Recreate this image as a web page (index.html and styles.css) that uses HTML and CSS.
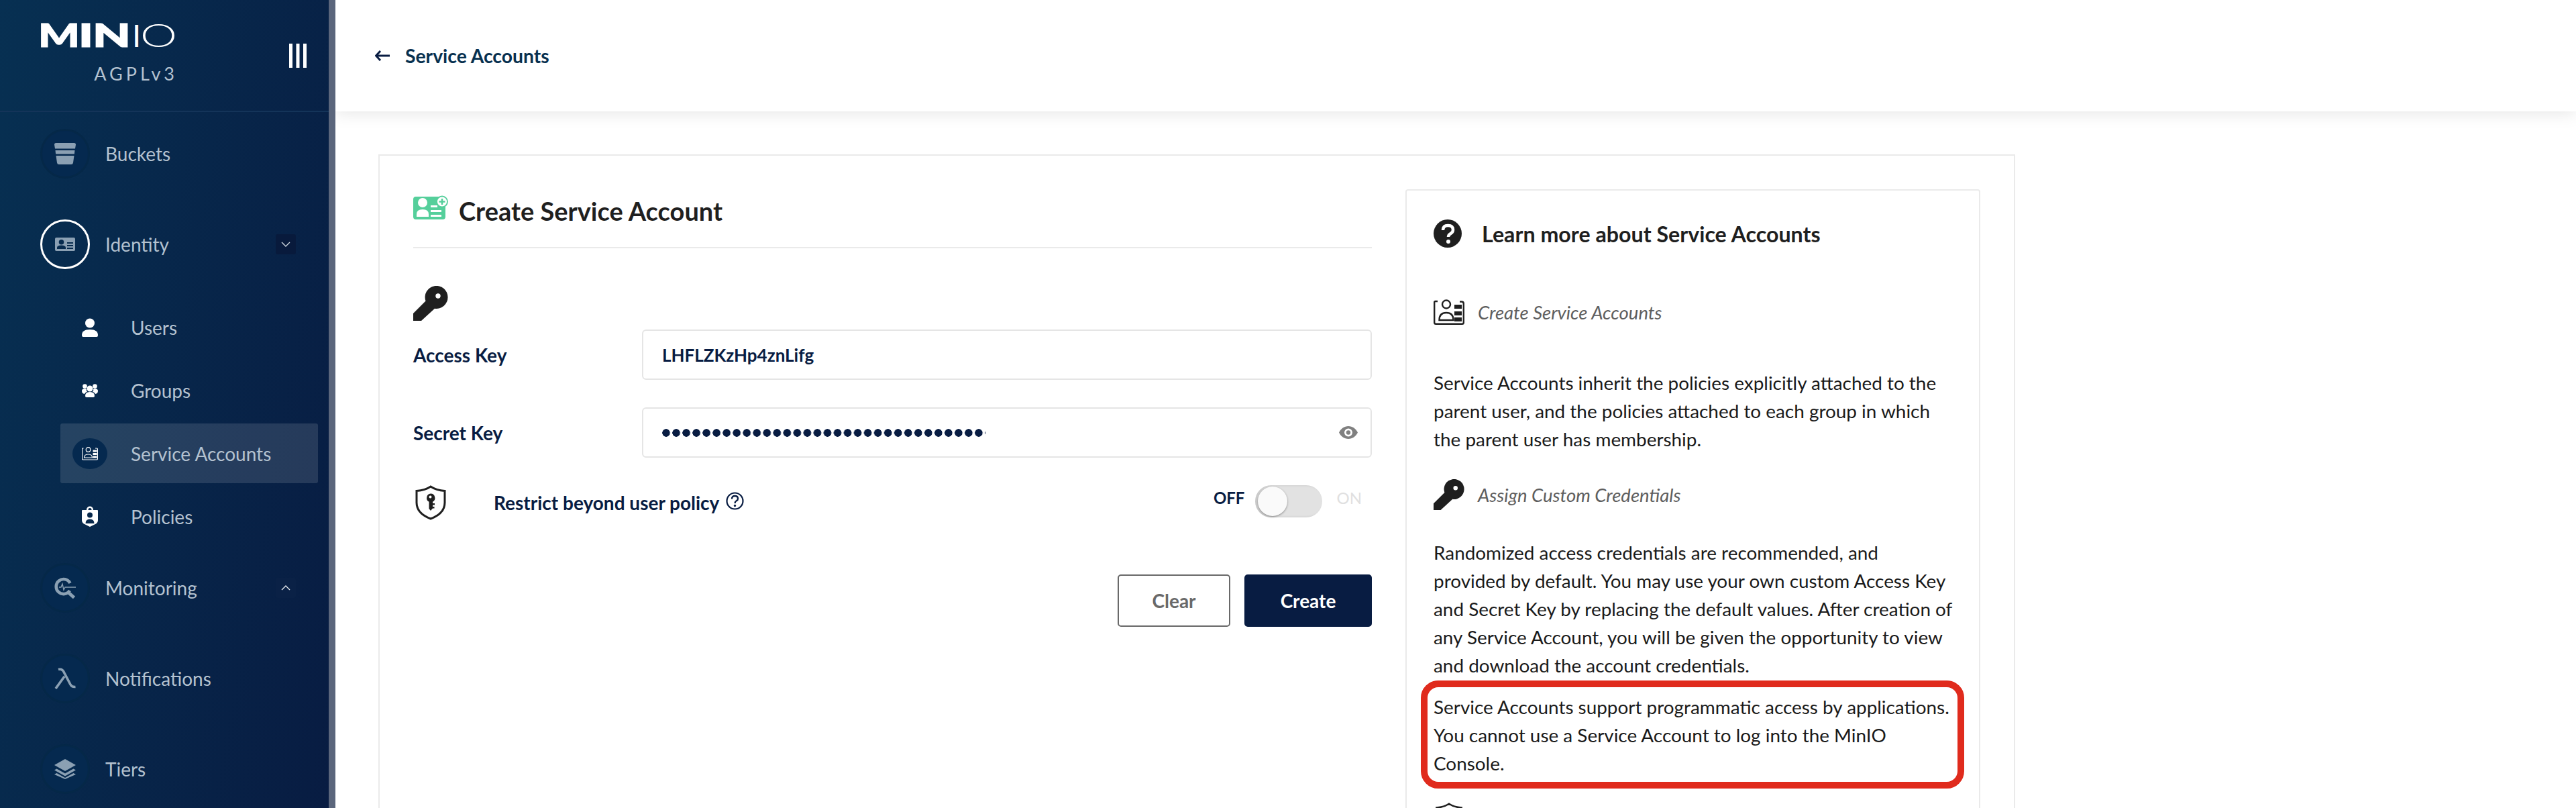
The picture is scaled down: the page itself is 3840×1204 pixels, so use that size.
FILE: index.html
```html
<!DOCTYPE html>
<html lang="en">
<head>
  <meta charset="UTF-8">
  <title>Create Service Account</title>
  <link rel="stylesheet" href="styles.css">
</head>
<body>

  <aside class="sidebar">
    <div class="brand">
      <div class="brand-text">
        <svg class="logo" viewBox="-6 -14 206 62" width="206" height="62">
          <text class="logo-bold" x="-3" y="33" textLength="62" lengthAdjust="spacingAndGlyphs">M</text>
          <text class="logo-bold" x="57" y="33" textLength="22" lengthAdjust="spacingAndGlyphs">I</text>
          <text class="logo-bold" x="78" y="33" textLength="57" lengthAdjust="spacingAndGlyphs">N</text>
          <text class="logo-reg" x="137" y="33">I</text>
          <text class="logo-thin" x="149" y="33" textLength="55" lengthAdjust="spacingAndGlyphs">O</text>
        </svg>
        <div class="license">AGPLv3</div>
      </div>
      <svg class="collapse" viewBox="0 0 26 36" width="26" height="36"><path d="M0 0h5v36H0zM10.500 0h5v36h-5zM21 0h5v36h-5z" fill="#fff"/></svg>
    </div>

    <nav class="nav">
      <a class="nav-item">
        <span class="nav-icon">
          <svg viewBox="0 0 32 32" width="32" height="32"><path d="M0 2.500Q0 0 2.500 0h27Q32 0 32 2.500L31 8.500H1zM1.500 11h29l-.6 5.500H2.100zM2.500 19h27l-1.500 10.500Q27.700 32 25 32H7q-2.700 0-3-2.500z" fill="#8ba0b3"/></svg>
        </span>
        <span class="nav-label">Buckets</span>
      </a>

      <a class="nav-item open">
        <span class="nav-icon active">
          <svg viewBox="0 0 30 20" width="30" height="20"><path fill-rule="evenodd" d="M2 0h26q2 0 2 2v16q0 2-2 2H2q-2 0-2-2V2q0-2 2-2zm7.500 3a3.800 3.800 0 1 0 0 7.600 3.800 3.800 0 0 0 0-7.600zM3 17h13v-2q0-3.500-6.500-3.500T3 15zM18 7v2h9V7zm0 4v2h9v-2zm0 4v2h9v-2z" fill="#8ba0b3"/></svg>
        </span>
        <span class="nav-label">Identity</span>
        <span class="caret dark">
          <svg viewBox="0 0 14 8" width="14" height="8"><path d="M1 1l6 6 6-6" fill="none" stroke="#cfd8e0" stroke-width="1.400"/></svg>
        </span>
      </a>

      <div class="sub-list">
        <a class="sub-item">
          <span class="sub-icon">
            <svg viewBox="0 0 24 28" width="24" height="28"><circle cx="12" cy="7.500" r="7" fill="#fff"/><path d="M0 25.500Q0 17 12 17t12 8.500q0 2.500-2 2.500H2q-2 0-2-2.500z" fill="#fff"/></svg>
          </span>
          <span class="sub-label">Users</span>
        </a>
        <a class="sub-item">
          <span class="sub-icon">
            <svg viewBox="0 0 24 20" width="24" height="20"><g fill="#fff"><circle cx="12" cy="7" r="4.500"/><path d="M5 18q0-6 7-6t7 6q0 2-2 2H7q-2 0-2-2z"/><circle cx="4.500" cy="3.500" r="3.300"/><circle cx="19.500" cy="3.500" r="3.300"/><path d="M0 10.500Q0 7 4.500 7q2 0 2.500.8-1 2.500 1 3.700-3 1-4 3.500Q0 14.500 0 10.500zM24 10.500Q24 7 19.500 7q-2 0-2.500.8 1 2.500-1 3.700 3 1 4 3.500 4-.5 4-4.500z"/></g></svg>
          </span>
          <span class="sub-label">Groups</span>
        </a>
        <a class="sub-item selected">
          <span class="sub-icon dark-disc">
            <svg viewBox="0 0 24 20" width="24" height="20"><g fill="none" stroke="#fff" stroke-width="1.200"><path d="M2.500 2H1q-.5 0-.5.500v15q0 1.500 1.500 1.500h20q1.500 0 1.500-1.500v-14q0-1.500-1.500-1.500h-2"/><circle cx="9.500" cy="4" r="3.300"/><path d="M3.500 16q0-5 6-5t6 5z"/></g><path d="M16.500 4.500h6v3h-6zM16.500 9h6v3h-6zM16.500 13.500h6v3h-6z" fill="#fff"/></svg>
          </span>
          <span class="sub-label">Service Accounts</span>
        </a>
        <a class="sub-item">
          <span class="sub-icon">
            <svg viewBox="0 0 24 31" width="24" height="31"><path fill-rule="evenodd" d="M7 6V5.500a5 5 0 0 1 10 0V6h6q1 0 1 1v14q0 4-4 6l-8 4-8-4q-4-2-4-6V7q0-1 1-1zm2.500 0h5v-.5a2.500 2.500 0 0 0-5 0zM12 9.500a4 4 0 1 0 0 8 4 4 0 0 0 0-8zM5.500 26h13q0-6.500-6.500-6.500T5.500 26z" fill="#fff"/></svg>
          </span>
          <span class="sub-label">Policies</span>
        </a>
      </div>

      <a class="nav-item">
        <span class="nav-icon">
          <svg viewBox="0 0 32 32" width="32" height="32"><g fill="none" stroke="#8ba0b3"><path d="M23.500 9A11 11 0 1 0 23 20" stroke-width="4.600"/><path d="M20.500 22.500l9 8" stroke-width="5"/><path d="M7 15h3l2-5 2 9 2-4h16" stroke-width="1.400"/></g></svg>
        </span>
        <span class="nav-label">Monitoring</span>
        <span class="caret">
          <svg viewBox="0 0 14 8" width="14" height="8"><path d="M1 7l6-6 6 6" fill="none" stroke="#e6ebef" stroke-width="1.400"/></svg>
        </span>
      </a>

      <a class="nav-item">
        <span class="nav-icon">
          <svg viewBox="0 0 32 32" width="32" height="32"><path d="M6 2.500Q12 1 14.500 7L24 25q2 4 7.500 3.500M15 13L2 31" fill="none" stroke="#8ba0b3" stroke-width="3.600"/></svg>
        </span>
        <span class="nav-label">Notifications</span>
      </a>

      <a class="nav-item">
        <span class="nav-icon">
          <svg viewBox="0 0 32 30" width="32" height="30"><path d="M16 0l16 9-16 9L0 9z" fill="#8ba0b3"/><path d="M3.500 14.500L16 21.500l12.500-7L32 16.500 16 25.500 0 16.500zM3.500 21L16 28l12.500-7L32 23 16 30 0 23z" fill="#8ba0b3"/></svg>
        </span>
        <span class="nav-label">Tiers</span>
      </a>
    </nav>
  </aside>

  <main class="main">
    <header class="topbar">
      <svg class="back-arrow" viewBox="0 0 22 16" width="22" height="16"><path d="M8 1L1.500 8 8 15M2 8h20" fill="none" stroke="#081c42" stroke-width="3"/></svg>
      <span class="back-text">Service Accounts</span>
    </header>

    <section class="card">
      <div class="form-col">
        <div class="form-title">
          <svg viewBox="0 0 52 36" width="52" height="36"><path fill-rule="evenodd" d="M4 2h35a11 11 0 0 0 9 12v18q0 4-4 4H4q-4 0-4-4V6q0-4 4-4zm10 2a7 7 0 1 0 0 14 7 7 0 0 0 0-14zM5 32h18v-4q0-7-9-7t-9 7zm21-17v3h10v-3zm0 7v3h16v-3zm0 7v3h16v-3z" fill="#55cf9b"/><circle cx="43" cy="9.500" r="8" fill="#fff" stroke="#55cf9b" stroke-width="1.800"/><path d="M43 5v9M38.500 9.500h9" stroke="#55cf9b" stroke-width="2.600"/></svg>
          <h1>Create Service Account</h1>
        </div>

        <svg class="key-big" viewBox="0 0 52 52" width="52" height="52"><path fill-rule="evenodd" d="M0 41L18.500 22.500A17 17 0 1 1 32 33.700L12 52H0zM37 11.300a3.700 3.700 0 1 0 0 7.400 3.700 3.700 0 0 0 0-7.400z" fill="#1f1f1f"/></svg>

        <div class="field">
          <label class="field-label">Access Key</label>
          <div class="field-input">LHFLZKzHp4znLifg</div>
        </div>

        <div class="field">
          <label class="field-label">Secret Key</label>
          <div class="field-input">
            <span class="dots"></span>
            <svg class="eye" viewBox="0 0 28 19" width="28" height="19"><path fill-rule="evenodd" d="M14 0C8 0 2.800 3.800 0 9.500 2.800 15.200 8 19 14 19s11.200-3.800 14-9.500C25.200 3.800 20 0 14 0zm0 3.500a6 6 0 1 1 0 12 6 6 0 0 1 0-12zm0 2.800a3.200 3.200 0 1 0 0 6.400 3.200 3.200 0 0 0 0-6.400z" fill="#808080"/></svg>
          </div>
        </div>

        <div class="restrict">
          <svg class="shield" viewBox="0 0 52 52" width="52" height="52"><path d="M26 2q8 5.500 21 6.500V26Q47 42 26 50 5 42 5 26V8.500Q18 7.500 26 2z" fill="none" stroke="#1f1f1f" stroke-width="3"/><path fill-rule="evenodd" d="M26 12.500a6.500 6.500 0 0 1 3 12.200V27h3v2.500h-3V32h2.500v2.500H29L26 38l-2.500-3V24.700a6.500 6.500 0 0 1 2.500-12.200zm-.5 3a2 2 0 1 0 0 4 2 2 0 0 0 0-4z" fill="#1f1f1f"/></svg>
          <span class="restrict-label">Restrict beyond user policy</span>
          <svg class="help-dot" viewBox="0 0 27 27" width="27" height="27"><circle cx="13.500" cy="13.500" r="12" fill="none" stroke="#081c42" stroke-width="2.200"/><path d="M9 10.500q0-4.500 4.500-4.500t4.500 4q0 2.200-2.200 3.300t-2.300 3.700" fill="none" stroke="#081c42" stroke-width="2.400"/><circle cx="13.500" cy="20.500" r="1.700" fill="#081c42"/></svg>
          <span class="switch-state on">OFF</span>
          <span class="switch"><span class="switch-knob"></span></span>
          <span class="switch-state">ON</span>
        </div>

        <div class="actions">
          <button class="btn btn-clear">Clear</button>
          <button class="btn btn-create">Create</button>
        </div>
      </div>

      <div class="help-box">
        <div class="help-title">
          <svg viewBox="0 0 42 42" width="42" height="42"><circle cx="21" cy="21" r="21" fill="#1f1f1f"/><path d="M14 16q0-7 7.500-7t7.500 6.500q0 3.500-3.500 5.500t-3.500 5" fill="none" stroke="#fff" stroke-width="4.500"/><circle cx="22" cy="33" r="3" fill="#fff"/></svg>
          <h2>Learn more about Service Accounts</h2>
        </div>

        <div class="help-head first">
          <svg viewBox="0 0 46 38" width="46" height="38"><g fill="none" stroke="#1f1f1f" stroke-width="2.400"><path d="M6 3H2.500Q1.200 3 1.200 4.500v30q0 2.300 2.300 2.300h39q2.300 0 2.300-2.300v-28q0-3-3-3H39"/><circle cx="19" cy="7.500" r="6"/><path d="M8.500 31q0-11 10.500-11t10.500 11z"/></g><path d="M31 8h11v6H31zM31 18h11v6H31zM31 27h11v6H31z" fill="#1f1f1f"/></svg>
          <span>Create Service Accounts</span>
        </div>
        <p class="after-first">Service Accounts inherit the policies explicitly attached to the parent user, and the policies attached to each group in which the parent user has membership.</p>

        <div class="help-head second">
          <svg viewBox="0 0 52 52" width="46" height="46"><path fill-rule="evenodd" d="M0 41L18.500 22.500A17 17 0 1 1 32 33.700L12 52H0zM37 11.300a3.700 3.700 0 1 0 0 7.400 3.700 3.700 0 0 0 0-7.400z" fill="#1f1f1f"/></svg>
          <span>Assign Custom Credentials</span>
        </div>
        <p class="after-second">Randomized access credentials are recommended, and provided by default. You may use your own custom Access Key and Secret Key by replacing the default values. After creation of any Service Account, you will be given the opportunity to view and download the account credentials.</p>
        <p class="note">Service Accounts support programmatic access by applications. You cannot use a Service Account to log into the MinIO Console.</p>

        <div class="help-head third">
          <svg viewBox="0 0 52 52" width="46" height="46"><path d="M26 2q8 5.500 21 6.500V26Q47 42 26 50 5 42 5 26V8.500Q18 7.500 26 2z" fill="none" stroke="#1f1f1f" stroke-width="3"/></svg>
        </div>
        <div class="callout"></div>
      </div>
    </section>
  </main>

</body>
</html>
```

FILE: styles.css
```css
* {
  box-sizing: border-box;
}

html, body {
  margin: 0;
  height: 1204px;
  overflow: hidden;
}

body {
  display: flex;
  font-family: "Lato", sans-serif;
  background-color: #fff;
  color: #081c42;
}

/* sidebar */
.sidebar {
  width: 500px;
  height: 1204px;
  flex-shrink: 0;
  background: linear-gradient(100deg, #073052 0%, #081c42 100%);
  border-right: 10px solid #5b667c;
  overflow: hidden;
}

.brand {
  height: 167px;
  padding: 23px 33px 0 54px;
  display: flex;
  justify-content: space-between;
  align-items: flex-start;
  border-bottom: 2px solid #143459;
}

.logo {
  display: block;
}

.logo-bold,
.logo-reg,
.logo-thin {
  font-size: 47px;
  fill: #fff;
}

.logo-bold {
  font-weight: 900;
  stroke: #fff;
  stroke-width: 1.200px;
}

.logo-reg {
  font-weight: 400;
}

.logo-thin {
  font-weight: 300;
}

.license {
  margin: 10px -5px 0 0;
  text-align: right;
  font-size: 27px;
  line-height: 30px;
  letter-spacing: 5px;
  color: #b4c2d0;
}

.collapse {
  margin-top: 42px;
}

.nav {
  padding: 25px 0 0 60px;
}

.nav-item {
  display: flex;
  align-items: center;
  height: 74px;
  margin-bottom: 61px;
  padding-right: 49px;
}

.nav-item.open {
  margin-bottom: 42px;
}

.nav-icon {
  width: 74px;
  height: 74px;
  border-radius: 50%;
  flex-shrink: 0;
  display: flex;
  align-items: center;
  justify-content: center;
  background-color: #05294f;
  border: 3px solid #052848;
}

.nav-icon.active {
  background-color: transparent;
  border-color: #fff;
}

.nav-label {
  margin-left: 23px;
  font-size: 28px;
  color: #b4c2d0;
  flex-grow: 1;
}

.caret {
  width: 30px;
  height: 30px;
  border-radius: 3px;
  display: flex;
  align-items: center;
  justify-content: center;
  background-color: #0a2146;
}

.caret.dark {
  background-color: #081a3c;
}

.sub-list {
  margin: 0 16px 25px 30px;
  display: flex;
  flex-direction: column;
  gap: 5px;
}

.sub-item {
  display: flex;
  align-items: center;
  height: 89px;
  padding-left: 18px;
  border-radius: 3px;
}

.sub-item.selected {
  background-color: rgba(255, 255, 255, 0.12);
}

.sub-icon {
  width: 52px;
  height: 46px;
  flex-shrink: 0;
  border-radius: 50%;
  display: flex;
  align-items: center;
  justify-content: center;
}

.sub-icon.dark-disc {
  background-color: #05294f;
}

.sub-label {
  margin-left: 35px;
  font-size: 28px;
  color: #b4c2d0;
}

/* main area */
.main {
  flex-grow: 1;
  min-width: 0;
  height: 1204px;
  overflow: hidden;
}

.topbar {
  height: 166px;
  padding-left: 59px;
  display: flex;
  align-items: center;
  background-color: #fff;
  box-shadow: 0 3px 24px rgba(0, 0, 0, 0.1);
}

.back-text {
  margin-left: 23px;
  font-size: 28.300px;
  font-weight: 700;
  color: #07304f;
}

.card {
  width: 2440px;
  height: 1100px;
  margin: 64px 0 0 64px;
  padding: 59px 50px 0;
  display: flex;
  gap: 50px;
  align-items: flex-start;
  border: 2px solid #eaeaea;
}

.form-col {
  width: 1429px;
  flex-shrink: 0;
}

.form-title {
  display: flex;
  align-items: flex-start;
  gap: 16px;
  height: 79px;
  border-bottom: 2px solid #eaeaea;
}

.form-title h1 {
  margin: 0;
  font-size: 38px;
  line-height: 47px;
  font-weight: 700;
  color: #1f1f1f;
}

.key-big {
  display: block;
  margin-top: 56px;
}

.field {
  display: flex;
  align-items: center;
  margin-bottom: 41px;
}

.key-big + .field {
  margin-top: 13px;
}

.field-label {
  width: 341px;
  flex-shrink: 0;
  font-size: 28px;
  font-weight: 700;
}

.field-input {
  flex-grow: 1;
  height: 75px;
  padding: 0 28px;
  display: flex;
  align-items: center;
  justify-content: space-between;
  border: 2px solid #e5e5e5;
  border-radius: 6px;
  font-size: 26px;
  font-weight: 700;
}

.dots {
  display: block;
  width: 482px;
  height: 12px;
  background-image: radial-gradient(circle at 6px 6px, #081c42 5.500px, transparent 6px);
  background-size: 15.040px 12px;
}

.eye {
  margin-right: -9px;
}

.restrict {
  display: flex;
  align-items: center;
  height: 52px;
}

.shield {
  flex-shrink: 0;
}

.restrict-label {
  margin-left: 68px;
  font-size: 28px;
  font-weight: 700;
}

.help-dot {
  margin: -6px auto 0 10px;
}

.switch-state {
  margin-top: -16px;
  font-size: 24px;
  font-weight: 400;
  color: #e0e0e0;
  margin-right: 15px;
}

.switch-state.on {
  color: #081c42;
  font-weight: 700;
  margin-right: 16px;
}

.switch {
  width: 100px;
  height: 48px;
  margin: -4px 21px 0 0;
  padding: 2px 4px;
  border-radius: 24px;
  background-color: #e2e2e2;
  box-shadow: inset 3px 0 4px rgba(0, 0, 0, 0.12);
}

.switch-knob {
  display: block;
  width: 44px;
  height: 44px;
  border-radius: 50%;
  background-color: #fafafa;
  box-shadow: 0 1px 3px rgba(0, 0, 0, 0.4);
}

.actions {
  display: flex;
  justify-content: flex-end;
  gap: 21px;
  margin-top: 81px;
}

.btn {
  height: 78px;
  border-radius: 5px;
  font-family: inherit;
  font-size: 28px;
  font-weight: 700;
}

.btn-clear {
  width: 168px;
  background-color: #fff;
  border: 2px solid #696969;
  color: #696969;
}

.btn-create {
  width: 190px;
  background-color: #081c42;
  border: 0;
  color: #fff;
}

/* help panel */
.help-box {
  position: relative;
  width: 857px;
  height: 1000px;
  flex-shrink: 0;
  margin-top: -9px;
  padding: 43px 37px 0 40px;
  border: 2px solid #eaeaea;
  border-radius: 4px;
}

.help-title {
  display: flex;
  align-items: center;
  gap: 30px;
}

.help-title h2 {
  margin: 0;
  font-size: 32.200px;
  font-weight: 700;
  color: #1f1f1f;
}

.help-head {
  display: flex;
  align-items: center;
  gap: 20px;
  font-size: 27.500px;
  font-style: italic;
  color: #5e5e5e;
}

.help-head.first {
  margin-top: 77px;
}

.help-head.second {
  margin-top: 39px;
}

.help-head.third {
  margin-top: 38px;
}

.help-box p {
  margin: 0;
  font-size: 27.900px;
  line-height: 42px;
  color: #1a1a1a;
}

.help-box p.after-first {
  margin-top: 65px;
}

.help-box p.after-second {
  margin-top: 42px;
}

.help-box p.note {
  margin-top: 20px;
}

/* red annotation drawn on top of the screenshot */
.callout {
  position: absolute;
  left: 21px;
  top: 730px;
  width: 810px;
  height: 161px;
  border: 10px solid #e02b1d;
  border-radius: 26px;
}
```
